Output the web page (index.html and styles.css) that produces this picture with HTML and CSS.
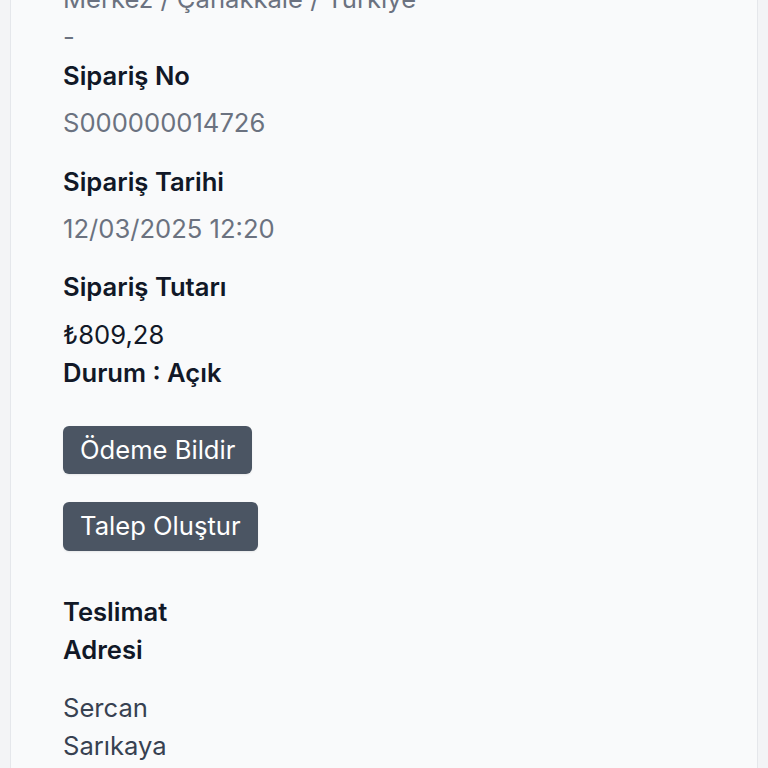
FILE: index.html
```html
<!DOCTYPE html>
<html lang="tr">
<head>
    <meta charset="UTF-8">
    <meta name="viewport" content="width=device-width, initial-scale=1.0">
    <title>Sipariş Detayı</title>
    <link rel="stylesheet" href="styles.css">
</head>
<body>
    <div class="card">
        <div class="address">
            <p class="muted">Merkez / Çanakkale / Türkiye</p>
            <p class="muted">-</p>
        </div>

        <div class="field">
            <div class="label">Sipariş No</div>
            <div class="value muted">S000000014726</div>
        </div>

        <div class="field">
            <div class="label">Sipariş Tarihi</div>
            <div class="value muted">12/03/2025 12:20</div>
        </div>

        <div class="field total">
            <div class="label">Sipariş Tutarı</div>
            <div class="value">₺809,28</div>
            <div class="label">Durum : Açık</div>
        </div>

        <div class="actions">
            <button class="btn">Ödeme Bildir</button>
            <button class="btn">Talep Oluştur</button>
        </div>

        <div class="delivery">
            <div class="label">Teslimat Adresi</div>
            <div class="delivery-text">Sercan Sarıkaya</div>
        </div>
    </div>
</body>
</html>
```

FILE: styles.css
```css
body {
    margin: 0;
    background: #f3f4f6;
    font-family: Inter, "Noto Sans", sans-serif;
    font-size: 25.6px;
    line-height: 38.4px;
    color: #111827;
    overflow: hidden;
}

p {
    margin: 0;
}

.card {
    margin: -20px 10px 0;
    padding: 0 52px 40px;
    background: #f9fafb;
    border-left: 1px solid #e5e7eb;
    border-right: 1px solid #e5e7eb;
    min-height: 900px;
}

.muted {
    color: #6b7280;
}

.label {
    font-weight: 600;
    color: #111827;
}

.field {
    margin-bottom: 19.8px;
}

.field .label:first-child {
    margin-bottom: 9.2px;
}

.field .value {
    color: #6b7280;
}

.total {
    margin-bottom: 0;
}

.total .value {
    color: #111827;
}

.actions {
    display: flex;
    flex-direction: column;
    align-items: flex-start;
    gap: 28px;
    padding-top: 33px;
}

.btn {
    font-family: inherit;
    font-size: 25.6px;
    line-height: 38.4px;
    color: #ffffff;
    background: #4b5563;
    border: none;
    border-radius: 6px;
    padding: 5px 17px;
    box-shadow: 0 1px 2px rgba(0, 0, 0, 0.08);
}

.delivery {
    width: 170px;
    padding-top: 42px;
}

.delivery .label {
    margin-bottom: 19.2px;
}

.delivery-text {
    color: #374151;
}
```
